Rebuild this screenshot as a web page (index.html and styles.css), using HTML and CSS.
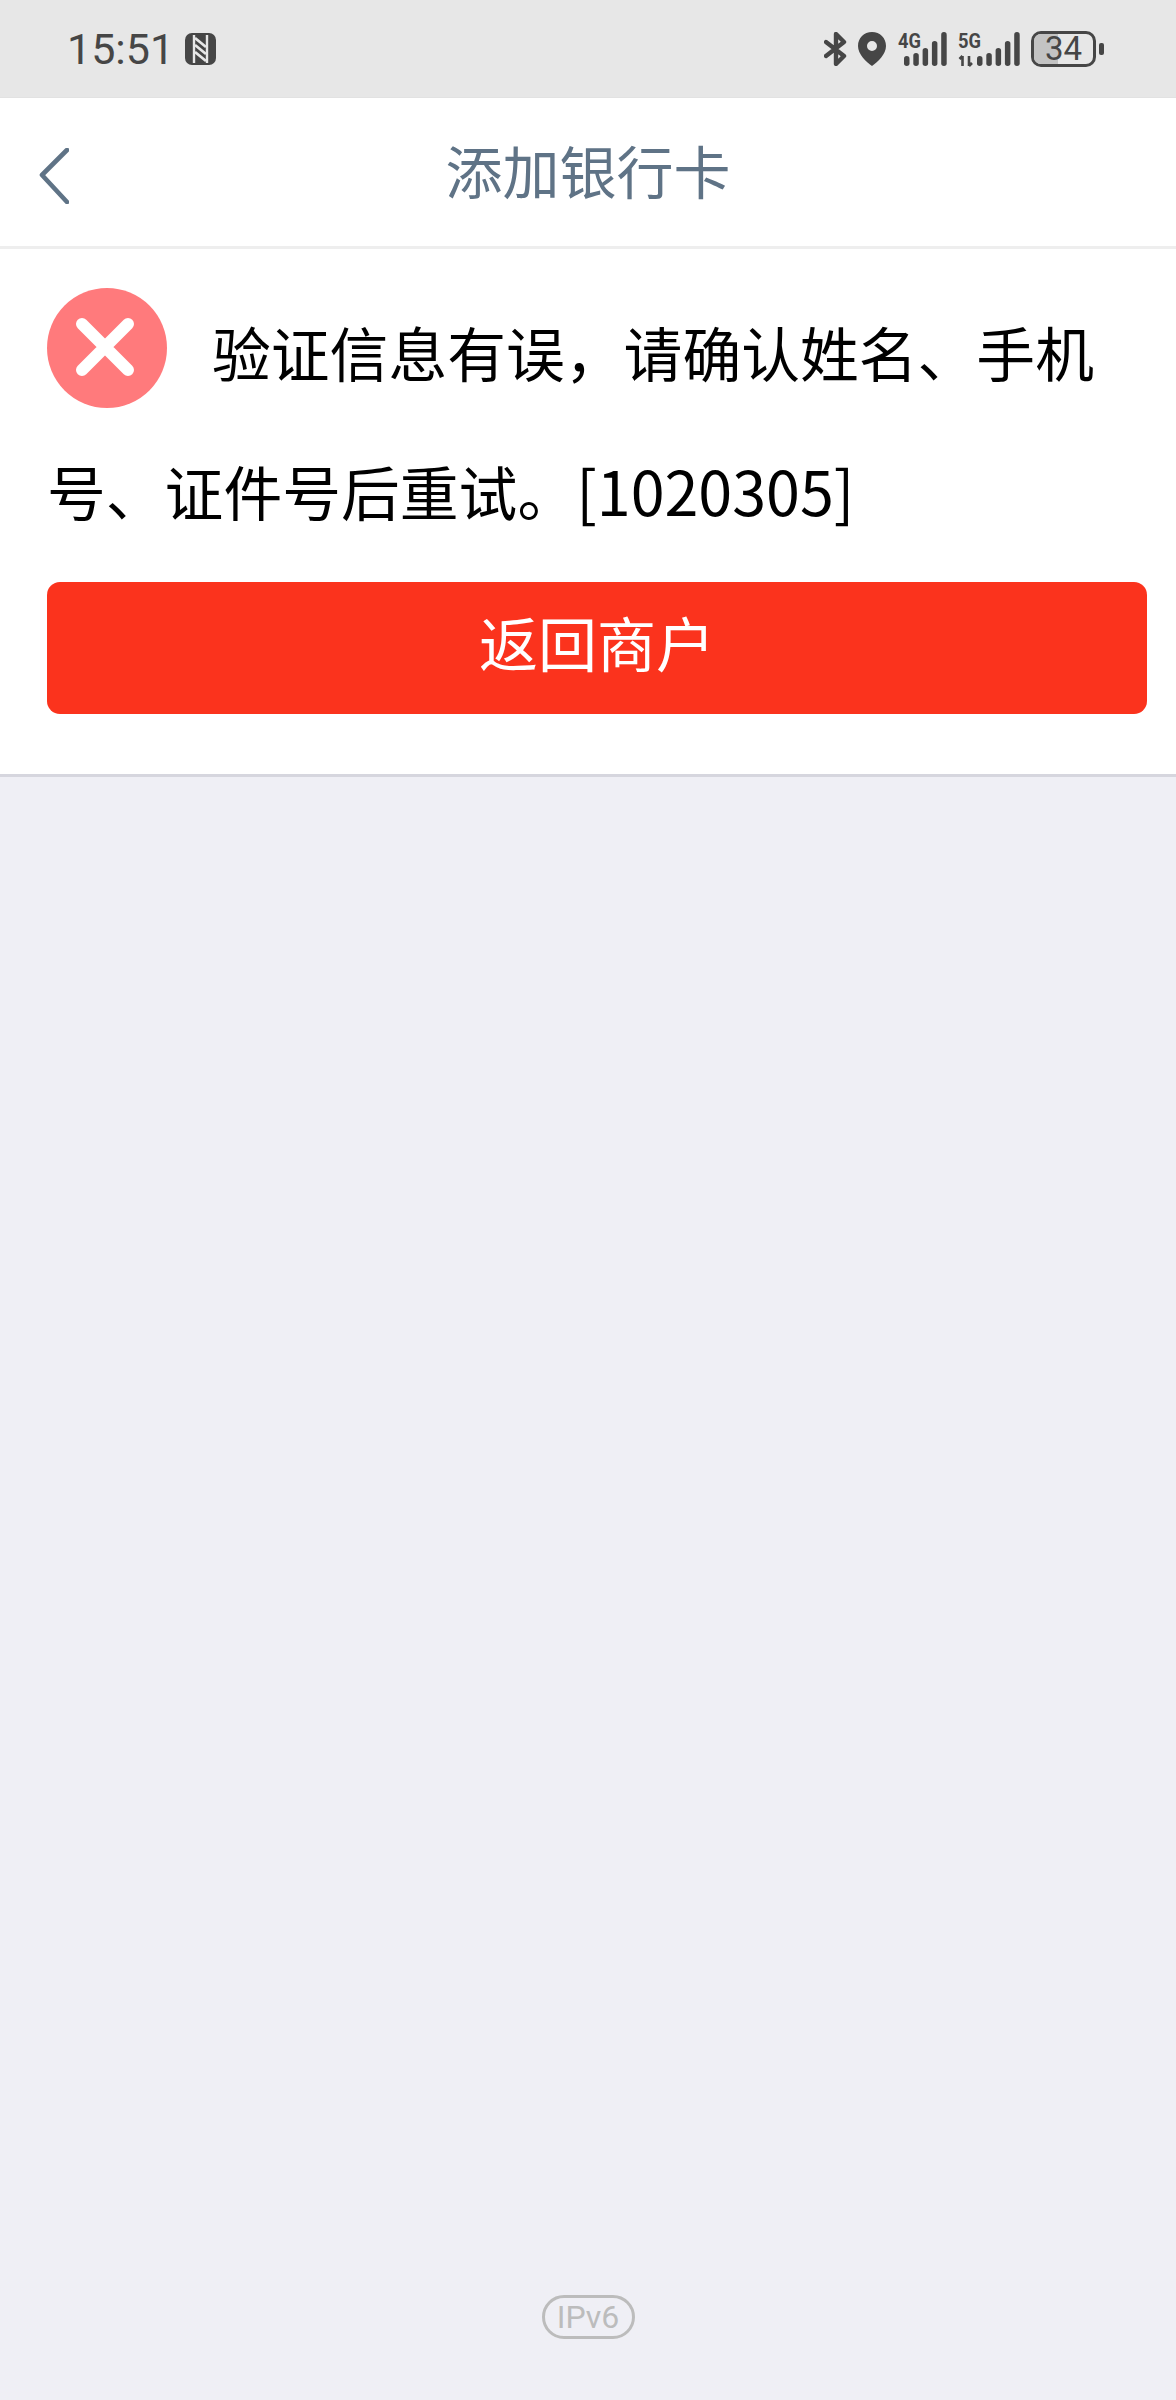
FILE: index.html
```html
<!DOCTYPE html>
<html lang="zh-CN">
<head>
    <meta charset="UTF-8">
    <meta name="viewport" content="width=device-width, initial-scale=1.0">
    <title>添加银行卡</title>
    <link rel="stylesheet" href="styles.css">
</head>
<body>
    <div class="status-bar">
        <div class="status-left">
            <span class="time">15:51</span>
            <svg class="nfc-icon" viewBox="0 0 31 32" width="31" height="32">
                <rect width="31" height="32" rx="7" fill="#464646"/>
                <path d="M9 2v28M22 2v28" stroke="#e7e7e7" stroke-width="2.4" fill="none"/>
                <path d="M10 5l11 9M10 12l11 9M10 19l11 9" stroke="#e7e7e7" stroke-width="2.8" fill="none"/>
            </svg>
        </div>
        <div class="status-right">
            <svg class="bt-icon" viewBox="0 0 23 34" width="23" height="34">
                <path d="M2 10l18 14-8 8V2l8 8L2 24" stroke="#464646" stroke-width="4.4" fill="none" stroke-linecap="round" stroke-linejoin="round"/>
            </svg>
            <svg class="pin-icon" viewBox="0 0 28 34" width="28" height="34">
                <path fill-rule="evenodd" fill="#464646" d="M14 0C6 0 0 6 0 14c0 8 8 16 14 20 6-4 14-12 14-20C28 6 22 0 14 0zm0 9a5 5 0 1 1 0 10 5 5 0 0 1 0-10z"/>
            </svg>
            <svg class="signal-icon" viewBox="0 0 50 34" width="50" height="34">
                <text class="signal-text" x="1" y="16" textLength="23" lengthAdjust="spacingAndGlyphs">4G</text>
                <g fill="#464646">
                    <rect x="7" y="24" width="5.5" height="10" rx="2.7"/>
                    <rect x="16.3" y="21" width="5.5" height="13" rx="2.7"/>
                    <rect x="25.6" y="16" width="5.5" height="18" rx="2.7"/>
                    <rect x="34.9" y="9" width="5.5" height="25" rx="2.7"/>
                    <rect x="44.2" y="0" width="5.5" height="34" rx="2.7"/>
                </g>
            </svg>
            <svg class="signal-icon" viewBox="0 0 62 34" width="62" height="34">
                <text class="signal-text" x="0" y="16" textLength="23" lengthAdjust="spacingAndGlyphs">5G</text>
                <path d="M4.5 24v10M1.5 27l3-3M11 24v10M14 31l-3 3" stroke="#464646" stroke-width="2.6" fill="none"/>
                <g fill="#464646">
                    <rect x="19" y="24" width="5.5" height="10" rx="2.7"/>
                    <rect x="28.3" y="21" width="5.5" height="13" rx="2.7"/>
                    <rect x="37.6" y="16" width="5.5" height="18" rx="2.7"/>
                    <rect x="46.9" y="9" width="5.5" height="25" rx="2.7"/>
                    <rect x="56.2" y="0" width="5.5" height="34" rx="2.7"/>
                </g>
            </svg>
            <div class="battery">
                <div class="battery-body">
                    <div class="battery-fill"></div>
                    <span class="battery-num">34</span>
                </div>
                <div class="battery-tip"></div>
            </div>
        </div>
    </div>

    <div class="header">
        <svg class="back-icon" viewBox="0 0 30 56" width="30" height="56">
            <path d="M28 2L3 27l25 27" stroke="#5f7386" stroke-width="4.6" fill="none" stroke-linecap="round" stroke-linejoin="round"/>
        </svg>
        <h1 class="title">添加银行卡</h1>
    </div>

    <div class="result">
        <p class="message">
            <svg class="error-icon" viewBox="0 0 120 120" width="120" height="120">
                <circle cx="60" cy="60" r="60" fill="#ff7a7c"/>
                <path d="M35 36l46 46M81 36L35 82" stroke="#fff" stroke-width="12" stroke-linecap="round"/>
            </svg>验证信息有误，请确认姓名、手机号、证件号后重试。<span class="code">[1020305]</span>
        </p>
        <a class="back-btn" href="#">返回商户</a>
    </div>

    <div class="content">
        <span class="ipv6">IPv6</span>
    </div>
</body>
</html>
```

FILE: styles.css
```css
* {
    box-sizing: border-box;
}

body {
    margin: 0;
    height: 2400px;
    display: flex;
    flex-direction: column;
    background-color: #efeff5;
    font-family: "Noto Sans CJK SC", "Noto Sans", sans-serif;
}

/* status bar */
.status-bar {
    height: 98px;
    padding: 0 72px 0 67px;
    display: flex;
    justify-content: space-between;
    align-items: center;
    background-color: #e7e7e7;
    border-bottom: 1px solid #e2e2e2;
    color: #464646;
}

.status-left {
    display: flex;
    align-items: center;
    gap: 11px;
}

.time {
    font-family: Roboto, sans-serif;
    font-size: 43px;
    line-height: 50px;
}

.status-right {
    display: flex;
    align-items: center;
    gap: 11px;
}

.signal-icon {
    overflow: visible;
}

.signal-text {
    font-family: Roboto, sans-serif;
    font-size: 21px;
    font-weight: 700;
    fill: #464646;
}

.battery {
    display: flex;
    align-items: center;
    gap: 3px;
}

.battery-body {
    position: relative;
    width: 65px;
    height: 36px;
    border: 3px solid #464646;
    border-radius: 10px;
    display: flex;
    align-items: center;
    justify-content: center;
}

.battery-fill {
    position: absolute;
    left: 0;
    top: 0;
    bottom: 0;
    width: 24px;
    border-radius: 7px 0 0 7px;
    background-color: #c3c3c3;
}

.battery-num {
    position: relative;
    font-family: Roboto, sans-serif;
    font-size: 33px;
    line-height: 30px;
}

.battery-tip {
    width: 5px;
    height: 12px;
    border-radius: 2px;
    background-color: #464646;
}

/* title */
.header {
    position: relative;
    height: 151px;
    padding-bottom: 6px;
    display: flex;
    align-items: center;
    justify-content: center;
    background-color: #fff;
    border-bottom: 3px solid #eeeeee;
}

.back-icon {
    position: absolute;
    left: 39px;
    top: 50px;
}

.title {
    margin: 0;
    font-size: 57px;
    font-weight: 400;
    color: #5f7386;
}

/* error message */
.result {
    height: 528px;
    padding: 0 29px 0 47px;
    background-color: #fff;
    border-bottom: 3px solid #d6d6de;
}

.message {
    margin: 0;
    padding-top: 34px;
    font-size: 58.8px;
    line-height: 138px;
    color: #000;
}

.code {
    font-size: 61px;
}

.error-icon {
    vertical-align: -31px;
    margin-right: 45px;
}

.back-btn {
    display: block;
    margin-top: 22px;
    height: 132px;
    line-height: 120px;
    text-align: center;
    font-size: 59px;
    color: #fff;
    text-decoration: none;
    background-color: #fb331d;
    border-radius: 13px;
}

.content {
    flex: 1;
    display: flex;
    justify-content: center;
    align-items: flex-end;
    padding-bottom: 61px;
}

.ipv6 {
    width: 93px;
    height: 44px;
    display: flex;
    align-items: center;
    justify-content: center;
    border: 3px solid #bcbcbc;
    border-radius: 22px;
    font-family: Roboto, sans-serif;
    font-size: 32px;
    color: #bcbcbc;
}
```
